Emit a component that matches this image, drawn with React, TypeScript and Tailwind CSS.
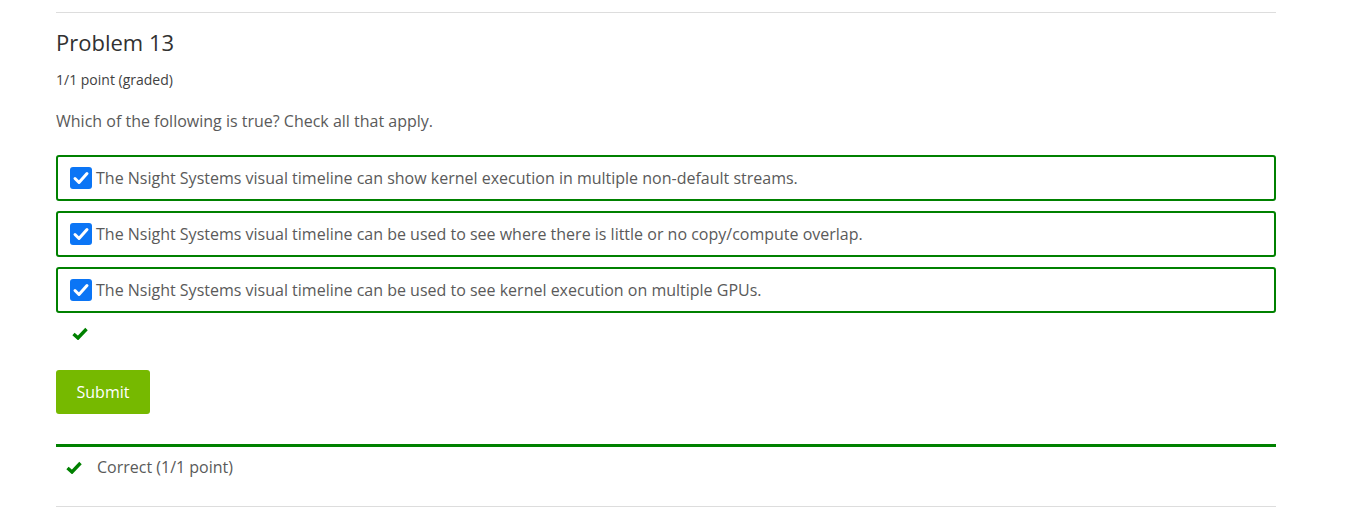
import React from "react";

const options = [
  "The Nsight Systems visual timeline can show kernel execution in multiple non-default streams.",
  "The Nsight Systems visual timeline can be used to see where there is little or no copy/compute overlap.",
  "The Nsight Systems visual timeline can be used to see kernel execution on multiple GPUs.",
];

function CheckBox() {
  return (
    <svg width="22" height="22" viewBox="0 0 22 22" className="shrink-0">
      <rect x="0" y="0" width="22" height="22" rx="3" fill="#0b75f5" />
      <path d="M5 11.5 L9 15.5 L17 6.5" stroke="#fff" strokeWidth="3" fill="none" strokeLinecap="round" strokeLinejoin="round" />
    </svg>
  );
}

function SmallCheck() {
  return (
    <svg width="16" height="13" viewBox="0 0 16 13">
      <path d="M1.5 7 L6 11 L14.5 2" stroke="#008100" strokeWidth="3.4" fill="none" />
    </svg>
  );
}

export default function App() {
  return (
    <div className="bg-white w-[1350px] h-[527px] overflow-hidden" style={{ fontFamily: '"Open Sans", sans-serif' }}>
      <div className="ml-[56px] w-[1220px] pt-[12px]">
        <div className="border-t border-[#dddddd]" />
        <h2 className="mt-[15px] text-[22px] leading-[28px] text-[#313131]">Problem 13</h2>
        <div className="mt-[15px] text-[14px] leading-[18px] text-[#414141]">1/1 point (graded)</div>
        <p className="mt-[21px] text-[16px] leading-[22px] text-[#5a5a5a]">Which of the following is true? Check all that apply.</p>
        <div className="mt-[23px] flex flex-col gap-[10px]">
          {options.map((o) => (
            <div key={o} className="h-[46px] border-2 border-[#008100] rounded-[3px] flex items-center pl-[12px] gap-[4px]">
              <CheckBox />
              <span className="text-[16px] text-[#5a5a5a]">{o}</span>
            </div>
          ))}
        </div>
        <div className="mt-[13px] pl-[16px] h-[14px] flex items-center">
          <SmallCheck />
        </div>
        <button className="mt-[30px] w-[94px] h-[44px] rounded-[3px] bg-[#76b900] text-white text-[16px]">Submit</button>
        <div className="mt-[30px] border-t-[3px] border-[#008100]" />
        <div className="h-[40px] flex items-center pl-[10px] gap-[15px]">
          <SmallCheck />
          <span className="text-[16px] text-[#5a5a5a]">Correct (1/1 point)</span>
        </div>
        <div className="mt-[19px] border-t border-[#dddddd]" />
      </div>
    </div>
  );
}
